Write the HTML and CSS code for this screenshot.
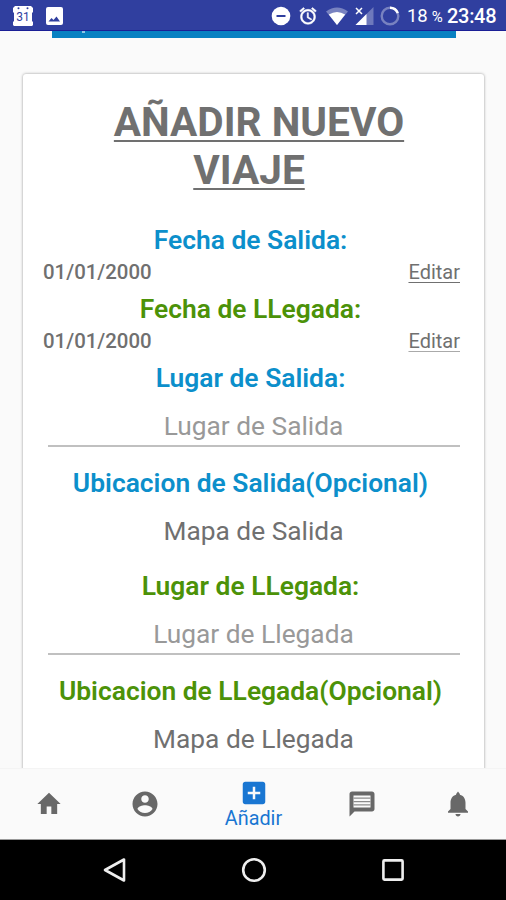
FILE: index.html
```
<!DOCTYPE html>
<html lang="es">
<head>
    <meta charset="UTF-8">
    <meta name="viewport" content="width=device-width, initial-scale=1.0">
    <title>Añadir nuevo viaje</title>
    <link rel="stylesheet" href="styles.css">
</head>
<body>
    <header class="status-bar">
        <svg class="calendar" width="20" height="22" viewBox="0 0 20 22">
            <path fill="#fff" d="M2 1h16l2 2v4l-1 1v8l1 1v3l-1 1H1l-1-1v-3l1-1V8L0 7V3z"/>
            <circle cx="5.500" cy="3.300" r="1" fill="#303f9f"/>
            <circle cx="14.500" cy="3.300" r="1" fill="#303f9f"/>
            <text class="calendar-day" x="10" y="16" text-anchor="middle">31</text>
        </svg>
        <svg class="picture" width="17" height="18" viewBox="0 0 17 18">
            <rect width="17" height="18" rx="2" fill="#fff"/>
            <path fill="#303f9f" d="M2.500 14.500l3-3.500 2 2 3-3.500 3.500 5z"/>
        </svg>
        <div class="status-right">
            <svg width="20" height="20" viewBox="0 0 20 20">
                <circle cx="10" cy="10" r="9.300" fill="#fff"/>
                <path fill="#303f9f" d="M5.500 9h9v2h-9z"/>
            </svg>
            <svg class="alarm" width="20" height="20" viewBox="0 0 24 24">
                <path fill="#fff" stroke="#fff" stroke-width=".6" d="M22 5.720l-4.600-3.860-1.290 1.530 4.600 3.860L22 5.720zM7.880 3.390L6.600 1.860 2 5.710l1.290 1.530 4.590-3.850zM12.500 8H11v6l4.750 2.850.75-1.230-4-2.370V8zM12 4c-4.970 0-9 4.030-9 9s4.020 9 9 9c4.970 0 9-4.030 9-9s-4.030-9-9-9zm0 16c-3.870 0-7-3.130-7-7s3.130-7 7-7 7 3.130 7 7-3.130 7-7 7z"/>
            </svg>
            <svg class="wifi" width="22" height="18" viewBox="0 0 22 18">
                <path fill="#fff" opacity=".35" d="M0 4.500Q11-3.500 22 4.500L11 18z"/>
                <path fill="#fff" d="M2.800 7.600Q11 2.500 19.200 7.600L11 18z"/>
            </svg>
            <svg class="signal" width="19" height="18" viewBox="0 0 19 18">
                <path fill="#fff" opacity=".3" d="M18.500 0v18H.500z"/>
                <path fill="#fff" d="M11.500 7v11H.500z"/>
                <path stroke="#fff" stroke-width="1.500" d="M1 1l6 6M7 1L1 7"/>
            </svg>
            <svg class="battery" width="20" height="20" viewBox="0 0 20 20" fill="none" stroke="#fff" stroke-width="2.400">
                <circle cx="10" cy="10" r="8.300" opacity=".35"/>
                <path d="M10 1.700A8.300 8.300 0 0 1 17.800 7.200"/>
            </svg>
            <span class="percent">18 <small>%</small></span>
            <span class="clock">23:48</span>
        </div>
    </header>

    <main class="content">
        <div class="top-button"><span class="descender"></span></div>
        <section class="card">
            <h1 class="title">AÑADIR NUEVO VIAJE</h1>
            <h2 class="label">Fecha de Salida:</h2>
            <div class="date-row">
                <span class="date">01/01/2000</span>
                <a class="edit">Editar</a>
            </div>
            <h2 class="label green">Fecha de LLegada:</h2>
            <div class="date-row">
                <span class="date">01/01/2000</span>
                <a class="edit light">Editar</a>
            </div>
            <h2 class="label">Lugar de Salida:</h2>
            <div class="field">Lugar de Salida</div>
            <h2 class="label">Ubicacion de Salida(Opcional)</h2>
            <div class="map">Mapa de Salida</div>
            <h2 class="label green">Lugar de LLegada:</h2>
            <div class="field">Lugar de Llegada</div>
            <h2 class="label green">Ubicacion de LLegada(Opcional)</h2>
            <div class="map">Mapa de Llegada</div>
        </section>
    </main>

    <nav class="tabs">
        <div class="tab">
            <svg width="28" height="30" viewBox="0 0 24 24" preserveAspectRatio="none"><path d="M10 20v-6h4v6h5v-8h3L12 3 2 12h3v8z"/></svg>
        </div>
        <div class="tab">
            <svg width="30" height="30" viewBox="0 0 24 24"><path d="M12 2C6.480 2 2 6.480 2 12s4.480 10 10 10 10-4.480 10-10S17.520 2 12 2zm0 3c1.660 0 3 1.340 3 3s-1.340 3-3 3-3-1.340-3-3 1.340-3 3-3zm0 14.200c-2.500 0-4.710-1.280-6-3.220.03-1.990 4-3.080 6-3.080 1.990 0 5.970 1.090 6 3.080-1.290 1.940-3.500 3.220-6 3.220z"/></svg>
        </div>
        <div class="tab active">
            <svg width="30" height="30" viewBox="0 0 24 24"><path d="M19 3H5c-1.110 0-2 .9-2 2v14c0 1.100.89 2 2 2h14c1.100 0 2-.9 2-2V5c0-1.100-.9-2-2-2zm-2 10h-4v4h-2v-4H7v-2h4V7h2v4h4v2z"/></svg>
            <span class="tab-text">Añadir</span>
        </div>
        <div class="tab">
            <svg width="30" height="30" viewBox="0 0 24 24">
                <path d="M20 2H4c-1.100 0-1.990.9-1.990 2L2 22l4-4h14c1.100 0 2-.9 2-2V4c0-1.100-.9-2-2-2z"/>
                <path fill="#fafafa" d="M5.200 5.200h13.600v9.600H5.200z"/>
                <path fill="#8c8c8c" d="M5.200 6.800h13.600v1H5.200zM5.200 9.500h13.600v1H5.200zM5.200 12.200h13.600v1H5.200z"/>
            </svg>
        </div>
        <div class="tab">
            <svg width="30" height="30" viewBox="0 0 24 24"><path d="M12 22c1.100 0 2-.9 2-2h-4c0 1.100.89 2 2 2zM18 16v-5c0-3.070-1.640-5.640-4.500-6.320V4L12 2l-1.500 2v.68C7.630 5.360 6 7.920 6 11v5l-2 2v1h16v-1l-2-2z"/></svg>
        </div>
    </nav>

    <footer class="system-bar">
        <svg width="26" height="26" viewBox="0 0 26 26"><path d="M22 2.500v21L3 13z"/></svg>
        <svg width="26" height="26" viewBox="0 0 26 26"><circle cx="13" cy="13" r="10.800"/></svg>
        <svg width="26" height="26" viewBox="0 0 26 26"><rect x="3.400" y="3.400" width="19.200" height="19.200" rx="1"/></svg>
    </footer>
</body>
</html>
```
FILE: styles.css
```
* {
    margin: 0;
    padding: 0;
    box-sizing: border-box;
}

body {
    width: 506px;
    height: 900px;
    display: flex;
    flex-direction: column;
    overflow: hidden;
    background-color: #fafafa;
    color: #707070;
    font-family: Roboto, sans-serif;
}

svg {
    display: block;
    flex-shrink: 0;
}

/* status bar */
.status-bar {
    height: 31px;
    flex-shrink: 0;
    display: flex;
    align-items: center;
    padding: 1px 9px 0 13px;
    background-color: #303f9f;
    border-bottom: 1px solid #1a1f96;
    color: #fff;
}

.calendar-day {
    fill: #303f9f;
    font-size: 12px;
}

.picture {
    margin-left: 13px;
}

.status-right {
    margin-left: auto;
    display: flex;
    align-items: center;
}

.alarm {
    margin-left: 7px;
}

.wifi {
    margin-left: 8px;
}

.signal {
    margin-left: 7px;
}

.battery {
    margin-left: 6px;
}

.percent {
    width: 40px;
    margin-left: 7px;
    font-size: 18.500px;
    letter-spacing: -0.2px;
    white-space: nowrap;
}

.percent small {
    font-size: 15px;
}

.clock {
    width: 50px;
    font-size: 20px;
    font-weight: 500;
    letter-spacing: -0.3px;
}

/* form */
.content {
    flex: 1;
    min-height: 0;
    overflow: hidden;
}

.top-button {
    height: 7px;
    margin: 0 50px 0 52px;
    padding-left: 30px;
    background-color: #0881c2;
}

.descender {
    display: block;
    width: 3px;
    height: 2px;
    background-color: #8fc6e4;
}

.card {
    height: 800px;
    margin: 36px 22px 0 23px;
    padding: 24px 24px 0 20px;
    background-color: #fff;
    border-radius: 3px;
    box-shadow: 0 0 3px rgba(0, 0, 0, 0.4);
}

.title {
    width: 320px;
    margin: 0 auto 27px 46px;
    font-size: 40.600px;
    line-height: 48px;
    font-weight: 700;
    text-align: center;
    text-indent: 20px;
    text-decoration: underline;
    text-decoration-thickness: 2px;
    text-underline-offset: 4px;
}

.label {
    height: 38px;
    padding-right: 2px;
    line-height: 38px;
    color: #0c8fcb;
    font-size: 26.400px;
    font-weight: 600;
    text-align: center;
    white-space: nowrap;
}

.green {
    color: #4c9208;
}

.date-row {
    height: 31.200px;
    display: flex;
    justify-content: space-between;
    align-items: center;
    padding-bottom: 6px;
    font-size: 20px;
}

.date {
    font-size: 20.400px;
    font-weight: 500;
}

.edit {
    text-decoration: underline;
    text-decoration-thickness: 1px;
    text-underline-offset: 3px;
}

.light {
    text-decoration-color: #aaa;
}

.field {
    height: 50px;
    margin: 0 0 17px 5px;
    padding-right: 1px;
    border-bottom: 2px solid #c0c0c0;
    color: #999;
    font-size: 26.300px;
    line-height: 59px;
    text-align: center;
}

.map {
    height: 64.500px;
    padding-left: 4px;
    font-size: 26.300px;
    line-height: 58px;
    text-align: center;
}

/* bottom navigation */
.tabs {
    height: 72px;
    flex-shrink: 0;
    display: flex;
    padding-left: 1px;
    border-top: 1px solid #f4f4f4;
    border-bottom: 1px solid #999;
    background-color: #fafafa;
    fill: #686868;
}

.tab {
    flex: 1;
    display: flex;
    flex-direction: column;
    align-items: center;
    justify-content: center;
}

.active {
    flex: 0 0 121px;
    fill: #1976d2;
    color: #1976d2;
}

.tab-text {
    font-size: 19.800px;
    line-height: 22px;
}

/* android buttons */
.system-bar {
    height: 60px;
    flex-shrink: 0;
    display: flex;
    align-items: center;
    justify-content: center;
    gap: 113px;
    padding-left: 2px;
    background-color: #000;
    fill: none;
    stroke: #eee;
    stroke-width: 2.600;
    stroke-linejoin: round;
}
```
